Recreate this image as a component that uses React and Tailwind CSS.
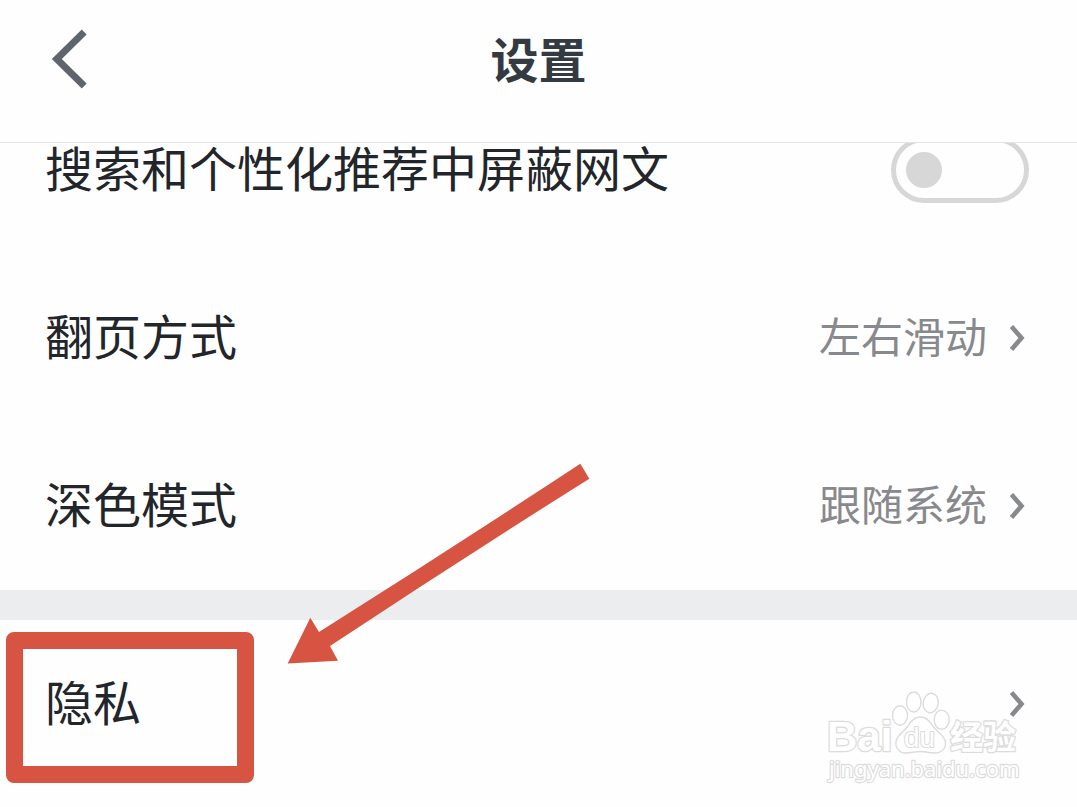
import React, { useState } from 'react';

const FONT = "font-['Noto_Sans_CJK_SC','Noto_Sans',sans-serif]";

function ChevronRight() {
  return (
    <svg viewBox="0 0 28 28" className="size-7 shrink-0" fill="none" aria-hidden="true">
      <path d="M10.5 2.5 20.5 14 10.5 25.5" stroke="#88898c" strokeWidth="4.6" />
    </svg>
  );
}

function SettingRow({ label, value }) {
  return (
    <button type="button" className="flex h-42 w-full items-center justify-between pl-[45px] pr-12 text-left cursor-pointer">
      <span className="pb-2 text-5xl text-[#22252a]">{label}</span>
      <span className="flex items-center gap-3.5">
        {value && <span className="pb-1.5 text-[42px] leading-none text-[#88898c]">{value}</span>}
        <ChevronRight />
      </span>
    </button>
  );
}

function SwitchRow({ label, checked, onChange }) {
  return (
    <label className="flex h-42 items-center justify-between pl-[45px] pr-12 cursor-pointer">
      <span className="pb-2 text-5xl text-[#22252a]">{label}</span>
      <input
        type="checkbox"
        role="switch"
        checked={checked}
        onChange={(e) => onChange(e.target.checked)}
        className="flex h-[66px] w-[138px] shrink-0 appearance-none items-center rounded-full border-5 border-[#d7d7d7] px-2.5 before:block before:size-9 before:rounded-full before:bg-[#d7d7d7] before:content-[''] checked:justify-end cursor-pointer"
      />
    </label>
  );
}

function Arrow() {
  return (
    <svg viewBox="0 0 304 202" className="pointer-events-none absolute -top-[158px] left-[287px] w-[304px]" aria-hidden="true">
      <path d="M.7 201.5 23.3 155.7 32 170Q165 86 293.3 1.7L302.3 16.7Q170 100 43 184L51 198.7Z" fill="#d75443" />
    </svg>
  );
}

function Watermark() {
  return (
    <svg
      viewBox="0 0 200 96"
      className="pointer-events-none absolute top-[70px] right-[53px] w-[200px]"
      fill="#fff"
      stroke="#dcdcdc"
      strokeWidth="1.4"
      strokeLinejoin="round"
      aria-hidden="true"
    >
      <text x="3" y="61" fontSize="42" fontWeight="700" strokeWidth="2.6" paintOrder="stroke" fontFamily="Liberation Sans, sans-serif">Bai</text>
      {/* paw */}
      <ellipse cx="76" cy="25.5" rx="7.5" ry="9.8" />
      <ellipse cx="89.7" cy="12" rx="7.3" ry="10" />
      <ellipse cx="106.7" cy="13" rx="7.5" ry="9.8" transform="rotate(8 106.7 13)" />
      <ellipse cx="117.7" cy="29.7" rx="7.5" ry="9.6" />
      <path d="M96.5 27c-6 0-9.5 4-12.5 9-3 4.500-10.500 9-11.800 15-1.500 7 3 12 9.500 12 5 0 9-1.500 14.500-1.500s9.500 1.500 14.500 1.500c7 0 12-5 10.500-12-1.500-6-9-10.500-12.500-15-3-5-6.200-9-12.200-9Z" />
      <text x="80" y="57" fontSize="28" strokeWidth="2.2" paintOrder="stroke" fontFamily="Liberation Sans, sans-serif">du</text>
      <text x="126" y="59" fontSize="33" fontWeight="700" strokeWidth="2.6" paintOrder="stroke" fontFamily="Noto Sans CJK SC, sans-serif">经验</text>
      <text x="5" y="87" fontSize="22" strokeWidth="2.4" paintOrder="stroke" fontFamily="Noto Sans, Open Sans, sans-serif">jingyan.baidu.com</text>
    </svg>
  );
}

export default function App() {
  const [blockWebNovels, setBlockWebNovels] = useState(false);

  return (
    <div className={`min-h-screen overflow-x-hidden bg-[#fefefe] ${FONT}`}>
      {/* Header */}
      <header className="relative z-10 grid h-[143px] grid-cols-[1fr_auto_1fr] items-start border-b border-[#e4e4e4] bg-[#fefefe] pt-6">
        <button type="button" aria-label="返回" className="ml-9 flex size-[70px] items-center justify-center cursor-pointer">
          <svg viewBox="0 0 70 70" className="size-[70px]" fill="none">
            <path d="M48.2 8 20.8 35 48.2 62" stroke="#60656d" strokeWidth="7" />
          </svg>
        </button>
        <h1 className="text-5xl leading-[66px] font-bold text-[#343a41]">设置</h1>
      </header>

      {/* List, scrolled partly under the header */}
      <main className="-mt-[57px]">
        <SwitchRow
          label="搜索和个性化推荐中屏蔽网文"
          checked={blockWebNovels}
          onChange={setBlockWebNovels}
        />
        <SettingRow label="翻页方式" value="左右滑动" />
        <SettingRow label="深色模式" value="跟随系统" />

        <div className="h-[30px] bg-[#ecedee]" />

        <div className="relative">
          <SettingRow label="隐私" />
          <div className="pointer-events-none absolute top-3 left-1.5 h-[151px] w-[248px] rounded-lg border-[17px] border-[#d75443]" />
          <Arrow />
          <Watermark />
        </div>
      </main>
    </div>
  );
}
